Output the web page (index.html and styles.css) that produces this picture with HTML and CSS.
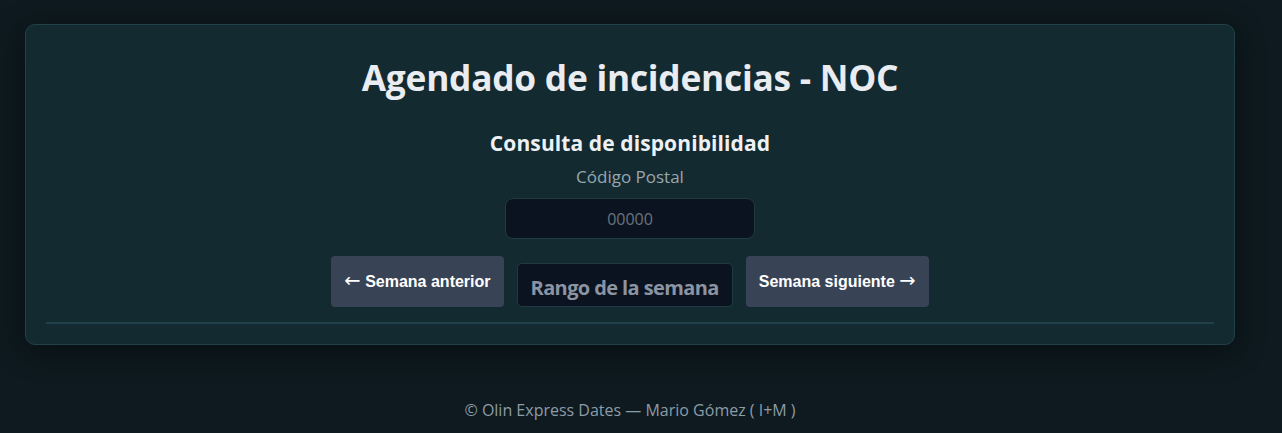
FILE: index.html
```html
<!DOCTYPE html>
<html lang="es">
<head>
<meta charset="utf-8">
<title>Agendado de incidencias - NOC</title>
<link rel="stylesheet" href="styles.css">
</head>
<body>
<main class="card">
  <h1 class="title">Agendado de incidencias - NOC</h1>
  <section class="query">
    <h2 class="subtitle">Consulta de disponibilidad</h2>
    <label class="label" for="cp">Código Postal</label>
    <input class="cp-input" id="cp" type="text" placeholder="00000">
    <div class="week-nav">
      <button class="nav-btn"><span class="arrow">←</span> Semana anterior</button>
      <div class="week-range">Rango de la semana</div>
      <button class="nav-btn">Semana siguiente <span class="arrow">→</span></button>
    </div>
  </section>
  <hr class="divider">
</main>
<footer class="footer">© Olin Express Dates — Mario Gómez ( I+M )</footer>
</body>
</html>
```
FILE: styles.css
```css
html, body {
  margin: 0;
  padding: 0;
  background: #0e1a1f;
}
body {
  font-family: "Open Sans", "Noto Sans", sans-serif;
  color: #e6eaee;
  padding: 24px 47px 0 25px;
}
.card {
  background: #132a30;
  border: 1px solid #22404a;
  border-radius: 10px;
  box-shadow: 0 6px 30px rgba(0, 0, 0, 0.45);
  padding: 19px 20px 20px;
  display: flex;
  flex-direction: column;
  align-items: center;
}
.title {
  margin: 11px 0 0;
  font-size: 35.3px;
  font-weight: 700;
  line-height: 44px;
  color: #e9ecf0;
  letter-spacing: -0.25px;
}
.query {
  display: flex;
  flex-direction: column;
  align-items: center;
  margin-top: 30px;
}
.subtitle {
  margin: 0;
  font-size: 21px;
  font-weight: 700;
  line-height: 28px;
  color: #eef1f4;
  letter-spacing: 0.1px;
}
.label {
  margin-top: 9px;
  font-size: 17px;
  line-height: 22px;
  color: #9aa6ae;
}
.cp-input {
  margin-top: 10px;
  width: 250px;
  height: 41px;
  box-sizing: border-box;
  background: #0c1320;
  border: 1px solid #1f3a42;
  border-radius: 8px;
  text-align: center;
  font-family: "Open Sans", "Noto Sans", sans-serif;
  font-size: 16px;
  color: #e6eaee;
  outline: none;
}
.cp-input::placeholder {
  color: #6b737d;
}
.week-nav {
  display: flex;
  align-items: flex-end;
  gap: 13px;
  margin-top: 17px;
}
.nav-btn {
  height: 51px;
  padding: 0 13px;
  background: #394356;
  border: none;
  border-radius: 4px;
  color: #ffffff;
  font-family: "Liberation Sans", Arial, sans-serif;
  font-weight: 700;
  font-size: 16px;
  line-height: 20px;
}
.arrow {
  font-family: "DejaVu Sans", sans-serif;
  font-weight: 400;
  font-size: 19.5px;
  line-height: 16px;
}
.week-range {
  height: 44px;
  box-sizing: border-box;
  padding: 4px 13px 0;
  display: flex;
  align-items: center;
  background: #0c1320;
  border: 1px solid #1f3a42;
  border-radius: 5px;
  font-size: 20px;
  font-weight: 700;
  color: #8a94a3;
  letter-spacing: -0.6px;
}
.divider {
  align-self: stretch;
  margin: 15px 0 0;
  border: none;
  height: 2px;
  background: #22404a;
}
.footer {
  text-align: center;
  margin-top: 54px;
  font-size: 16px;
  color: #8c9ca8;
}
```
